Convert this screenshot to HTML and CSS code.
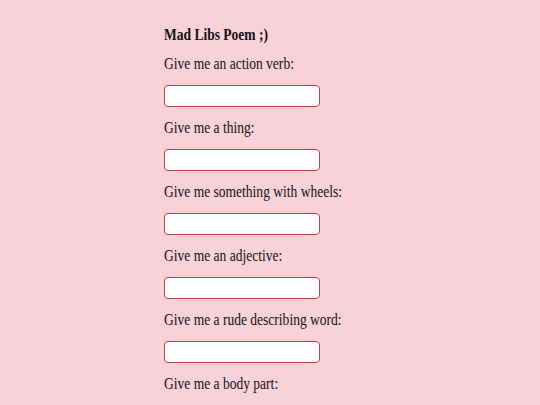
FILE: index.html
```html
<!DOCTYPE html>
<html lang="en">
<head>
    <meta charset="UTF-8">
    <meta name="viewport" content="width=device-width, initial-scale=1.0">
    <title>Mad Libs Poem</title>
    <link rel="stylesheet" href="styles.css">
</head>
<body>
    <div class="poem">
        <h4 class="title"><span class="squeeze">Mad Libs Poem ;)</span></h4>

        <div class="field">
            <label class="squeeze" for="verb">Give me an action verb:</label>
            <input type="text" id="verb">
        </div>
        <div class="field">
            <label class="squeeze" for="thing">Give me a thing:</label>
            <input type="text" id="thing">
        </div>
        <div class="field">
            <label class="squeeze" for="wheels">Give me something with wheels:</label>
            <input type="text" id="wheels">
        </div>
        <div class="field">
            <label class="squeeze" for="adjective">Give me an adjective:</label>
            <input type="text" id="adjective">
        </div>
        <div class="field">
            <label class="squeeze" for="rude">Give me a rude describing word:</label>
            <input type="text" id="rude">
        </div>
        <div class="field">
            <label class="squeeze" for="bodypart">Give me a body part:</label>
            <input type="text" id="bodypart">
        </div>
    </div>
</body>
</html>
```

FILE: styles.css
```css
body {
    margin: 0;
    background-color: #f9d2d9;
    font-family: "Liberation Serif", "Times New Roman", serif;
    font-size: 16px;
    line-height: 18px;
    color: #111;
}
.poem {
    width: 212px;
    margin: 0 auto;
    padding-top: 26px;
}
.title {
    font-size: 16px;
    font-weight: bold;
    margin: 0 0 11px;
}
/* text in the shot is narrower than plain Times */
.squeeze {
    display: inline-block;
    white-space: nowrap;
    transform: scaleX(0.845);
    transform-origin: left center;
}
.field {
    display: flex;
    flex-direction: column;
    align-items: flex-start;
    gap: 12px;
    margin-bottom: 12px;
}
input {
    box-sizing: border-box;
    width: 156px;
    height: 22px;
    border: 1px solid #c4424c;
    border-radius: 4px;
    background: white;
    padding: 2px 4px;
}
```
